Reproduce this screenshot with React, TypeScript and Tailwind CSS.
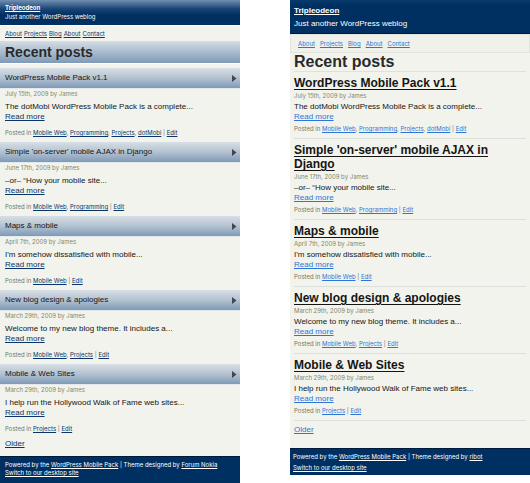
type Post = {
  title: string;
  date: string;
  excerpt: string;
  tags: string[];
};

const posts: Post[] = [
  { title: "WordPress Mobile Pack v1.1", date: "July 15th, 2009", excerpt: "The dotMobi WordPress Mobile Pack is a complete...", tags: ["Mobile Web", "Programming", "Projects", "dotMobi"] },
  { title: "Simple 'on-server' mobile AJAX in Django", date: "June 17th, 2009", excerpt: "–or– “How your mobile site...", tags: ["Mobile Web", "Programming"] },
  { title: "Maps & mobile", date: "April 7th, 2009", excerpt: "I'm somehow dissatisfied with mobile...", tags: ["Mobile Web"] },
  { title: "New blog design & apologies", date: "March 29th, 2009", excerpt: "Welcome to my new blog theme. It includes a...", tags: ["Mobile Web", "Projects"] },
  { title: "Mobile & Web Sites", date: "March 29th, 2009", excerpt: "I help run the Hollywood Walk of Fame web sites...", tags: ["Projects"] },
];

const navItems = ["About", "Projects", "Blog", "About", "Contact"];

function PostedIn({ tags, linkClass }: { tags: string[]; linkClass: string }) {
  return (
    <>
      Posted in{" "}
      {tags.map((tag, i) => (
        <span key={tag}>
          {i > 0 && ", "}
          <a href="#" className={linkClass}>{tag}</a>
        </span>
      ))}{" "}
      | <a href="#" className={linkClass}>Edit</a>
    </>
  );
}

function Footer({ designer }: { designer: string }) {
  return (
    <>
      <p>
        Powered by the <a href="#" className="underline">WordPress Mobile Pack</a> | Theme designed by{" "}
        <a href="#" className="underline">{designer}</a>
      </p>
      <p><a href="#" className="underline">Switch to our desktop site</a></p>
    </>
  );
}

const small = "font-[Inter,'Liberation_Sans',sans-serif] text-[6px]";

function NokiaTheme() {
  const link = "text-[#0b3468] underline";
  return (
    <div className="flex min-w-0 flex-1 flex-col bg-[#f1f3ec] text-[8px] text-[#151515]">
      <header className={`${small} bg-linear-to-b from-[#7190b2] via-[#1a4576] via-35% to-[#003062] to-60% px-[5px] pt-[3px] pb-1 leading-[9px] text-white`}>
        <a href="#" className="block font-bold underline">Tripleodeon</a>
        <p>Just another WordPress weblog</p>
      </header>
      <nav className={`${small} flex gap-[2px] border-t border-white px-[5px] leading-[15px]`}>
        {navItems.map((item, i) => <a key={i} href="#" className={link}>{item}</a>)}
      </nav>
      <h1 className="mb-1 border-b border-white bg-linear-to-b from-[#d5dde5] to-[#7f9ab7] px-[5px] text-[14px] leading-[22px] font-bold text-[#2a2a2a]">Recent posts</h1>
      <main>
        {posts.map((post) => (
          <article key={post.title} className="pb-[5px]">
            <h2 className="flex items-center justify-between border-b border-[#e3e8eb] bg-linear-to-b from-[#d8dfe6] via-[#b3c2d1] to-[#7f9ab7] pr-[3px] pl-[5px] leading-5">
              <a href="#">{post.title}</a>
              <svg viewBox="0 0 5 7" className="h-[7px] w-[5px]" aria-hidden="true"><path d="M0 0L4.5 3.5L0 7Z" fill="#44464a" /></svg>
            </h2>
            <div className="px-[5px]">
              <p className={`${small} leading-[9px] text-[#85876a]`}>{post.date} by James</p>
              <p className="mt-1 leading-[10px]">{post.excerpt}</p>
              <p className="leading-[10px]"><a href="#" className={link}>Read more</a></p>
              <p className={`${small} mt-[6px] leading-[9px] text-[#75785d]`}><PostedIn tags={post.tags} linkClass={link} /></p>
            </div>
          </article>
        ))}
        <p className="px-[5px] pb-[7px] leading-[11px]"><a href="#" className={link}>Older</a></p>
      </main>
      <footer className={`${small} flex-1 border-t border-[#001a3c] bg-[#003062] px-[5px] pt-1 pb-[6px] leading-[8px] text-white`}>
        <Footer designer="Forum Nokia" />
      </footer>
    </div>
  );
}

function RibotTheme() {
  const link = "text-[#2b76d8] underline";
  return (
    <div className="min-w-0 flex-1 self-start bg-[#f1f3ec] text-[8px] text-[#151515]">
      <header className="border-b border-[#001a3c] bg-linear-to-b from-[#0b3b6d] to-[#003062] to-15% px-1 pt-1 pb-[3px] leading-[13px] text-white">
        <a href="#" className="block font-bold underline">Tripleodeon</a>
        <p>Just another WordPress weblog</p>
      </header>
      <nav className={`${small} flex gap-[5px] border border-[#e2e5dd] bg-[#eff1ea] px-[7px] leading-[17px]`}>
        {navItems.map((item, i) => <a key={i} href="#" className={link}>{item}</a>)}
      </nav>
      <main className="px-1">
        <h1 className="border-b border-[#dfe2dc] text-[16px] leading-[18px] font-bold text-[#2a2a2a]">Recent posts</h1>
        {posts.map((post) => (
          <article key={post.title} className="border-b border-[#dae0dc] pt-1 pb-[5px]">
            <h2 className="text-[12px] leading-[14px] font-bold"><a href="#" className="underline underline-offset-2">{post.title}</a></h2>
            <p className={`${small} mt-px leading-[9px] text-[#85876a]`}>{post.date} by James</p>
            <p className="mt-[2px] leading-[10px]">{post.excerpt}</p>
            <p className="leading-[10px]"><a href="#" className={link}>Read more</a></p>
            <p className={`${small} mt-[2px] leading-[9px] text-[#75785d]`}><PostedIn tags={post.tags} linkClass={link} /></p>
          </article>
        ))}
        <p className="pt-[3px] pb-[13px] leading-[11px]"><a href="#" className={link}>Older</a></p>
      </main>
      <footer className={`${small} border-t border-[#001a3c] bg-[#003062] px-[3px] pt-[2px] pb-[2px] leading-[11px] text-white`}>
        <Footer designer="ribot" />
      </footer>
    </div>
  );
}

export default function App() {
  return (
    <div className="flex min-h-screen gap-[50px] bg-white font-['Liberation_Sans',Arial,sans-serif]">
      <NokiaTheme />
      <RibotTheme />
    </div>
  );
}
